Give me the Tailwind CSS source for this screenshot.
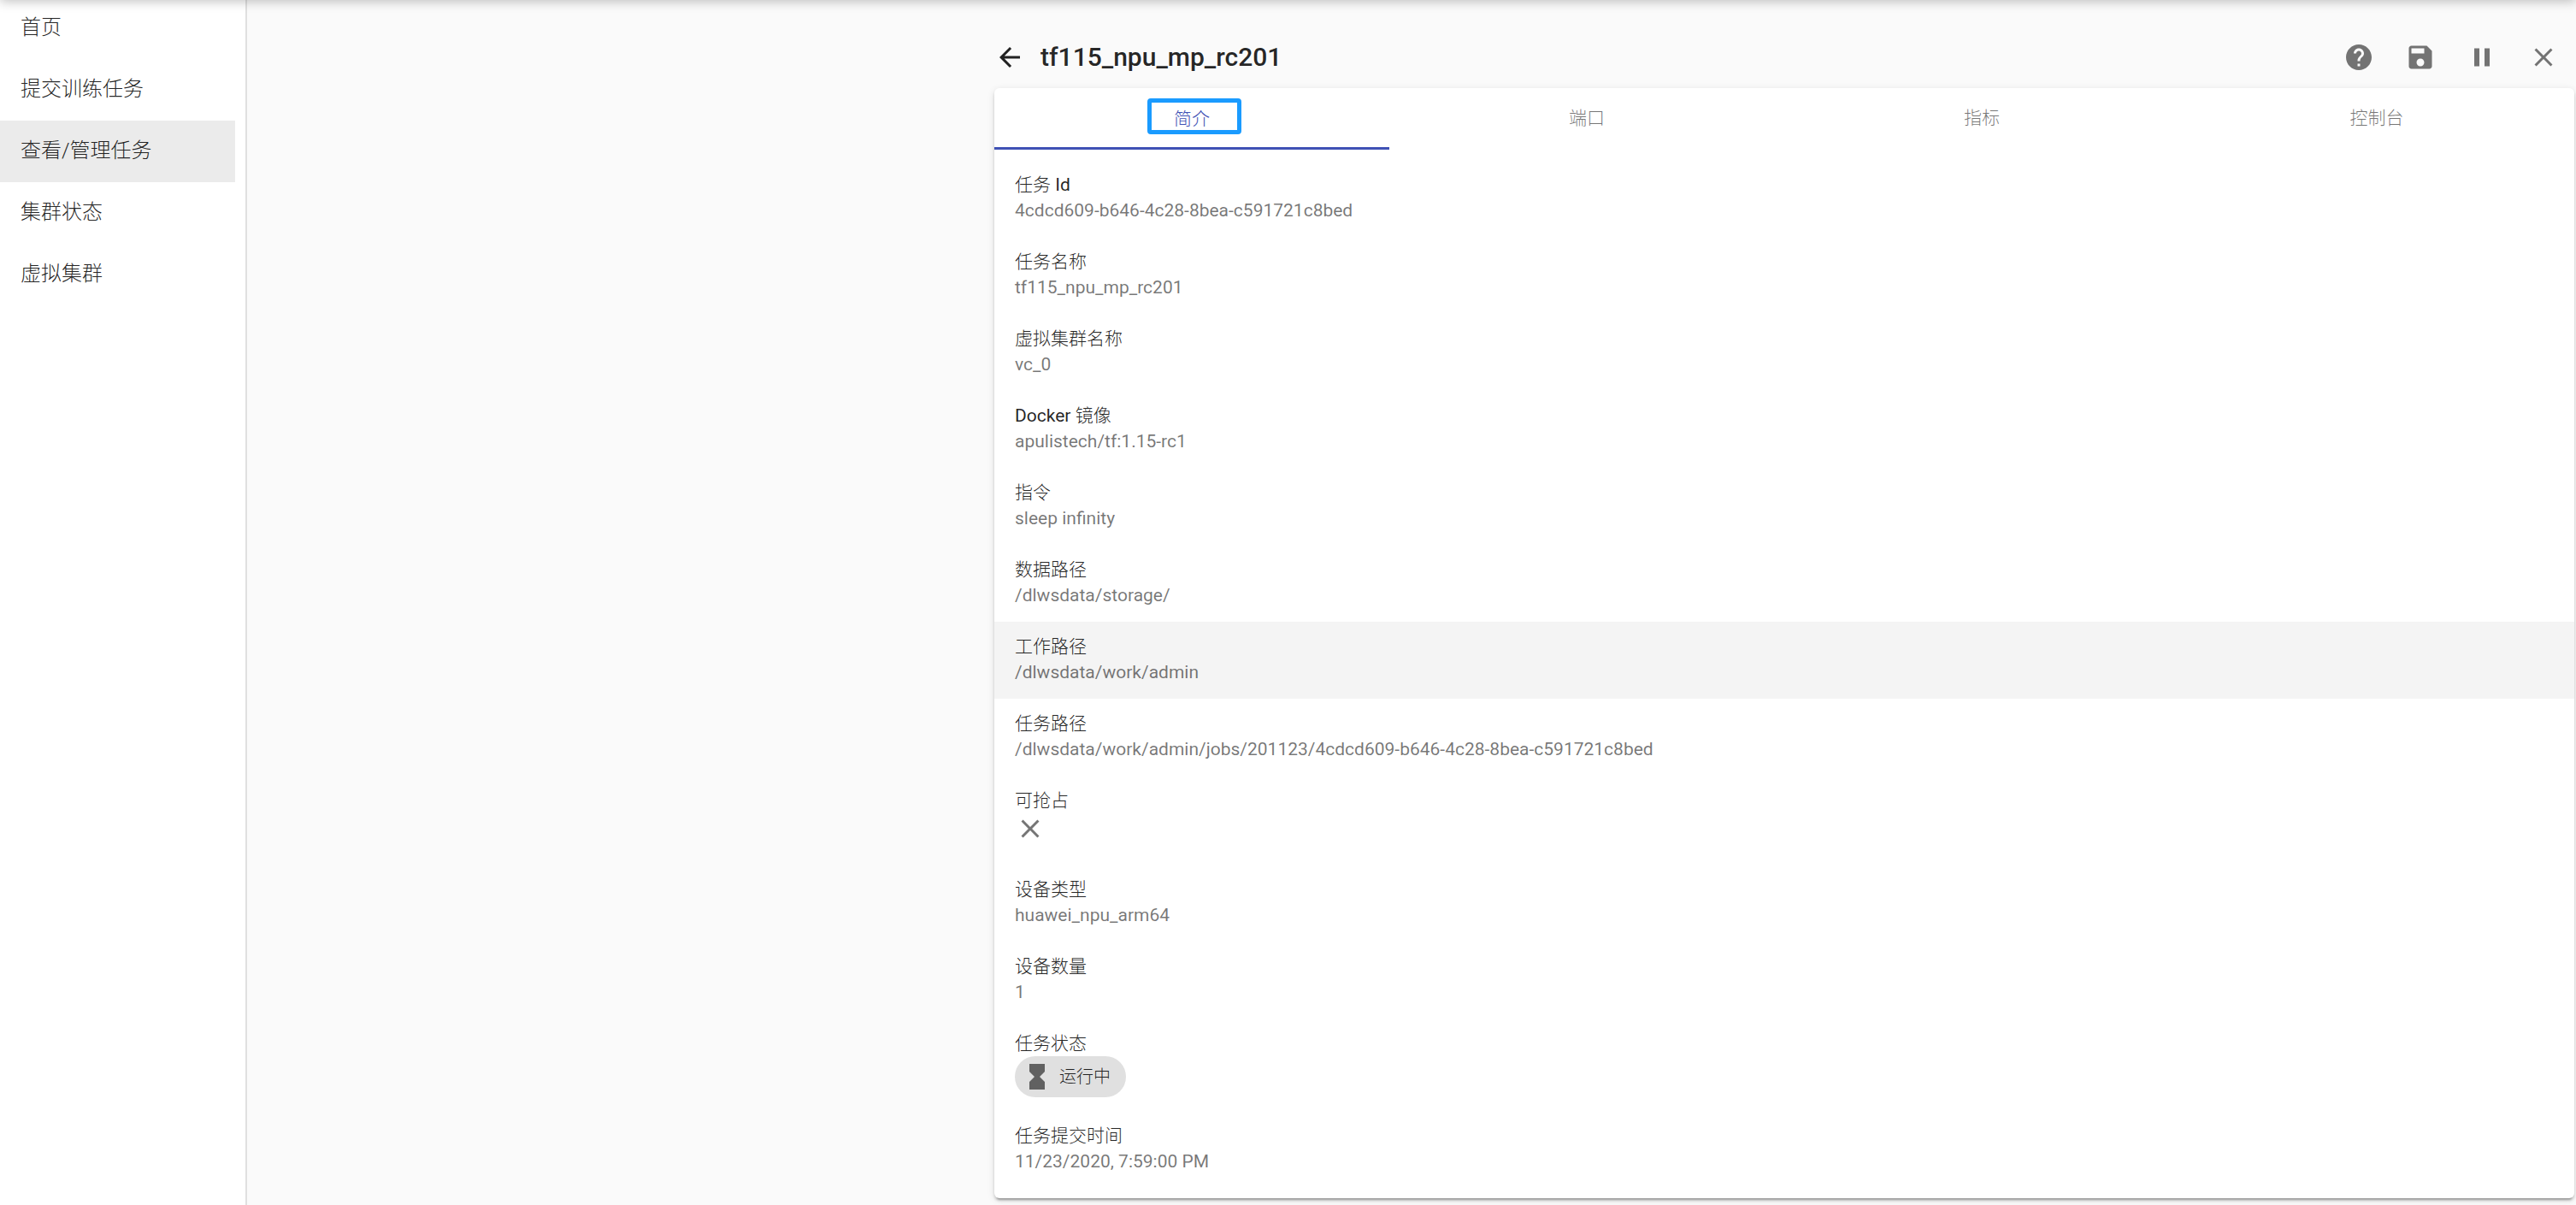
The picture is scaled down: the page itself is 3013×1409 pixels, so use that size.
<!DOCTYPE html>
<html lang="zh-CN">
<head>
<meta charset="utf-8">
<title>tf115_npu_mp_rc201</title>
<script src="https://cdn.jsdelivr.net/npm/@tailwindcss/browser@4"></script>
</head>
<body class="min-h-screen bg-[#fafafa] font-[Roboto,'Noto_Sans_CJK_SC_Light','Noto_Sans_CJK_SC',sans-serif] text-[21px] leading-[30px] text-black/87">
<div class="relative flex min-h-screen overflow-hidden">
  <!-- shadow cast by the app bar above -->
  <div class="absolute inset-x-0 -top-16 h-16 shadow-[0_2px_12px_0_rgba(0,0,0,0.24)]"></div>

  <aside class="w-[289px] shrink-0 border-r-2 border-[#e0e0e0] bg-white">
    <nav class="-mt-[3px] mr-3 flex flex-col text-[24px] font-light">
      <a href="#" class="flex h-[72px] items-center px-6 pb-0.5">首页</a>
      <a href="#" class="flex h-[72px] items-center px-6 pb-0.5">提交训练任务</a>
      <a href="#" aria-current="page" class="flex h-[72px] items-center bg-[#ebebeb] px-6 pb-0.5">查看/管理任务</a>
      <a href="#" class="flex h-[72px] items-center px-6 pb-0.5">集群状态</a>
      <a href="#" class="flex h-[72px] items-center px-6 pb-0.5">虚拟集群</a>
    </nav>
  </aside>

  <main class="mr-0.5 ml-[874px] flex-1 pt-[31px]">
    <header class="flex h-[72px] items-center">
      <button type="button" aria-label="返回" class="mr-[18px] size-9">
        <svg viewBox="0 0 24 24" class="size-9 fill-current"><path d="M20 11H7.83l5.59-5.59L12 4l-8 8 8 8 1.41-1.41L7.83 13H20v-2z"/></svg>
      </button>
      <h1 class="flex-1 text-[30px] leading-12 font-medium">tf115_npu_mp_rc201</h1>
      <div class="flex text-black/54">
        <button type="button" aria-label="帮助" class="p-[18px]">
          <svg viewBox="0 0 24 24" class="size-9 fill-current"><path d="M12 2C6.48 2 2 6.48 2 12s4.480 10 10 10 10-4.480 10-10S17.520 2 12 2zm1 17h-2v-2h2v2zm2.070-7.750l-.9.920C13.450 12.900 13 13.500 13 15h-2v-.5c0-1.100.450-2.100 1.170-2.830l1.240-1.260c.370-.360.590-.860.590-1.410 0-1.100-.9-2-2-2s-2 .9-2 2H8c0-2.210 1.790-4 4-4s4 1.790 4 4c0 .880-.360 1.680-.930 2.250z"/></svg>
        </button>
        <button type="button" aria-label="保存" class="p-[18px]">
          <svg viewBox="0 0 24 24" class="size-9 fill-current"><path d="M17 3H5c-1.110 0-2 .9-2 2v14c0 1.100.890 2 2 2h14c1.100 0 2-.9 2-2V7l-4-4zm-5 16c-1.660 0-3-1.340-3-3s1.340-3 3-3 3 1.340 3 3-1.340 3-3 3zm3-10H5V5h10v4z"/></svg>
        </button>
        <button type="button" aria-label="暂停" class="p-[18px]">
          <svg viewBox="0 0 24 24" class="size-9 fill-current"><path d="M6 19h4V5H6v14zm8-14v14h4V5h-4z"/></svg>
        </button>
        <button type="button" aria-label="关闭" class="p-[18px]">
          <svg viewBox="0 0 24 24" class="size-9 fill-current"><path d="M19 6.410L17.590 5 12 10.590 6.410 5 5 6.410 10.590 12 5 17.590 6.410 19 12 13.410 17.590 19 19 17.590 13.410 12z"/></svg>
        </button>
      </div>
    </header>

    <section class="rounded-md bg-white shadow-[0_5px_2px_-3px_rgba(0,0,0,0.2),0_3px_3px_0_rgba(0,0,0,0.14),0_2px_8px_0_rgba(0,0,0,0.12)]">
      <div role="tablist" class="grid h-[72px] grid-cols-4 font-light text-black/54">
        <button type="button" role="tab" aria-selected="true" class="relative border-b-3 border-[#3f51b5] pt-1 pb-0.5 text-[#3f51b5]">
          简介
          <span class="absolute top-3 left-1/2 -ml-[52px] h-[42px] w-[110px] rounded-[4px] border-5 border-[#1a9bff]"></span>
        </button>
        <button type="button" role="tab" class="pb-0.5">端口</button>
        <button type="button" role="tab" class="pb-0.5">指标</button>
        <button type="button" role="tab" class="pb-0.5">控制台</button>
      </div>

      <dl class="py-3">
        <div class="px-6 pt-3.5 pb-4"><dt><span class="font-light">任务</span> Id</dt><dd class="text-black/54">4cdcd609-b646-4c28-8bea-c591721c8bed</dd></div>
        <div class="px-6 pt-3.5 pb-4"><dt class="font-light">任务名称</dt><dd class="text-black/54">tf115_npu_mp_rc201</dd></div>
        <div class="px-6 pt-3.5 pb-4"><dt class="font-light">虚拟集群名称</dt><dd class="text-black/54">vc_0</dd></div>
        <div class="px-6 pt-3.5 pb-4"><dt>Docker <span class="font-light">镜像</span></dt><dd class="text-black/54">apulistech/tf:1.15-rc1</dd></div>
        <div class="px-6 pt-3.5 pb-4"><dt class="font-light">指令</dt><dd class="text-black/54">sleep infinity</dd></div>
        <div class="px-6 pt-3.5 pb-4"><dt class="font-light">数据路径</dt><dd class="text-black/54">/dlwsdata/storage/</dd></div>
        <div class="bg-[#f4f4f4] px-6 pt-3.5 pb-4"><dt class="font-light">工作路径</dt><dd class="text-black/54">/dlwsdata/work/admin</dd></div>
        <div class="px-6 pt-3.5 pb-4"><dt class="font-light">任务路径</dt><dd class="text-black/54">/dlwsdata/work/admin/jobs/201123/4cdcd609-b646-4c28-8bea-c591721c8bed</dd></div>
        <div class="px-6 pt-3.5 pb-4">
          <dt class="font-light">可抢占</dt>
          <dd class="h-11 text-black/54">
            <svg viewBox="0 0 24 24" role="img" aria-label="否" class="size-9 fill-current"><path d="M19 6.410L17.590 5 12 10.590 6.410 5 5 6.410 10.590 12 5 17.590 6.410 19 12 13.410 17.590 19 19 17.590 13.410 12z"/></svg>
          </dd>
        </div>
        <div class="px-6 pt-3.5 pb-4"><dt class="font-light">设备类型</dt><dd class="text-black/54">huawei_npu_arm64</dd></div>
        <div class="px-6 pt-3.5 pb-4"><dt class="font-light">设备数量</dt><dd class="text-black/54">1</dd></div>
        <div class="px-6 pt-3.5 pb-4">
          <dt class="font-light">任务状态</dt>
          <dd class="flex">
            <span class="flex h-12 items-center gap-2 rounded-full bg-[#e0e0e0] pr-[18px] pl-2 text-[20px] font-light">
              <svg viewBox="0 0 24 24" class="size-9 fill-[#616161]"><path d="M6 2v6h.010L6 8.010 10 12l-4 4 .010.010H6V22h12v-5.990h-.010L18 16l-4-4 4-3.990-.010-.010H18V2H6z"/></svg>
              运行中
            </span>
          </dd>
        </div>
        <div class="px-6 pt-3.5 pb-4"><dt class="font-light">任务提交时间</dt><dd class="text-black/54">11/23/2020, 7:59:00 PM</dd></div>
      </dl>
    </section>
  </main>
</div>
</body>
</html>
